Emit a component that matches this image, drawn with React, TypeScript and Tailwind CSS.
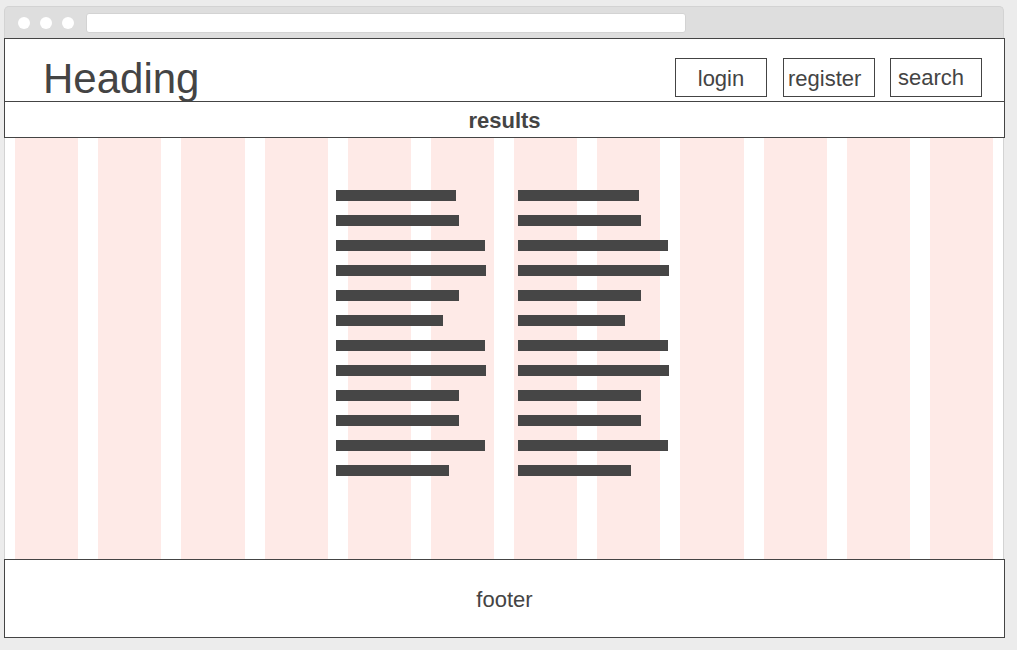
import React from "react";

const leftBars = [120, 123, 149, 150, 123, 107, 149, 150, 123, 123, 149, 113];
const rightBars = [121, 123, 150, 151, 123, 107, 150, 151, 123, 123, 150, 113];

function BarColumn({ widths }: { widths: number[] }) {
  return (
    <div className="flex w-[151px] flex-col gap-[14px]">
      {widths.map((w, i) => (
        <div key={i} className="h-[11px] bg-[#464646]" style={{ width: w }} />
      ))}
    </div>
  );
}

export default function App() {
  return (
    <div className="h-[650px] w-[1017px] bg-[#ececec] pl-[4px] pt-[6px] font-['Liberation_Sans',Arial,sans-serif] text-[#444]">
      <div className="w-[1001px]">
        {/* browser chrome */}
        <div className="flex h-[32px] w-[1000px] items-start rounded-t-[5px] border-x border-t border-[#d3d3d3] bg-[#dedede] pl-[13px]">
          <div className="mt-[10px] flex gap-[10px]">
            <div className="h-[12px] w-[12px] rounded-full bg-white" />
            <div className="h-[12px] w-[12px] rounded-full bg-white" />
            <div className="h-[12px] w-[12px] rounded-full bg-white" />
          </div>
          <div className="ml-[12px] mt-[6px] h-[20px] w-[600px] rounded-[3px] border border-[#d3d3d3] bg-white" />
        </div>

        {/* header */}
        <div className="flex h-[64px] w-[1001px] justify-between border border-[#444] bg-white">
          <div className="pl-[38px] pt-[19px] text-[42px] leading-none">Heading</div>
          <div className="flex pr-[22px] pt-[19px]">
            <div className="flex h-[39px] w-[92px] items-center justify-center border border-[#444] pt-[2px] text-[22px] leading-none">
              login
            </div>
            <div className="ml-[16px] flex h-[39px] w-[92px] items-center border border-[#444] pl-[4px] pt-[2px] text-[22px] leading-none">
              register
            </div>
            <div className="ml-[15px] flex h-[39px] w-[92px] items-center border border-[#444] pl-[7px] text-[22px] leading-none">
              search
            </div>
          </div>
        </div>

        {/* results bar */}
        <div className="flex h-[36px] w-[1001px] items-center justify-center border-x border-b border-[#444] bg-white pt-[2px] text-[22px] font-bold leading-none">
          results
        </div>

        {/* grid area */}
        <div className="relative h-[421px] w-[1000px] border-x border-[#d3d3d3] bg-white">
          <div className="absolute inset-0 grid grid-cols-12 gap-5 px-[10px]">
            {Array.from({ length: 12 }).map((_, i) => (
              <div key={i} className="bg-[#feeae7]" />
            ))}
          </div>
          <div className="relative flex gap-[31px] pl-[331px] pt-[52px]">
            <BarColumn widths={leftBars} />
            <BarColumn widths={rightBars} />
          </div>
        </div>

        {/* footer */}
        <div className="flex h-[79px] w-[1001px] items-center justify-center border border-[#444] bg-white pt-[2px] text-[22px] leading-none">
          footer
        </div>
      </div>
    </div>
  );
}
